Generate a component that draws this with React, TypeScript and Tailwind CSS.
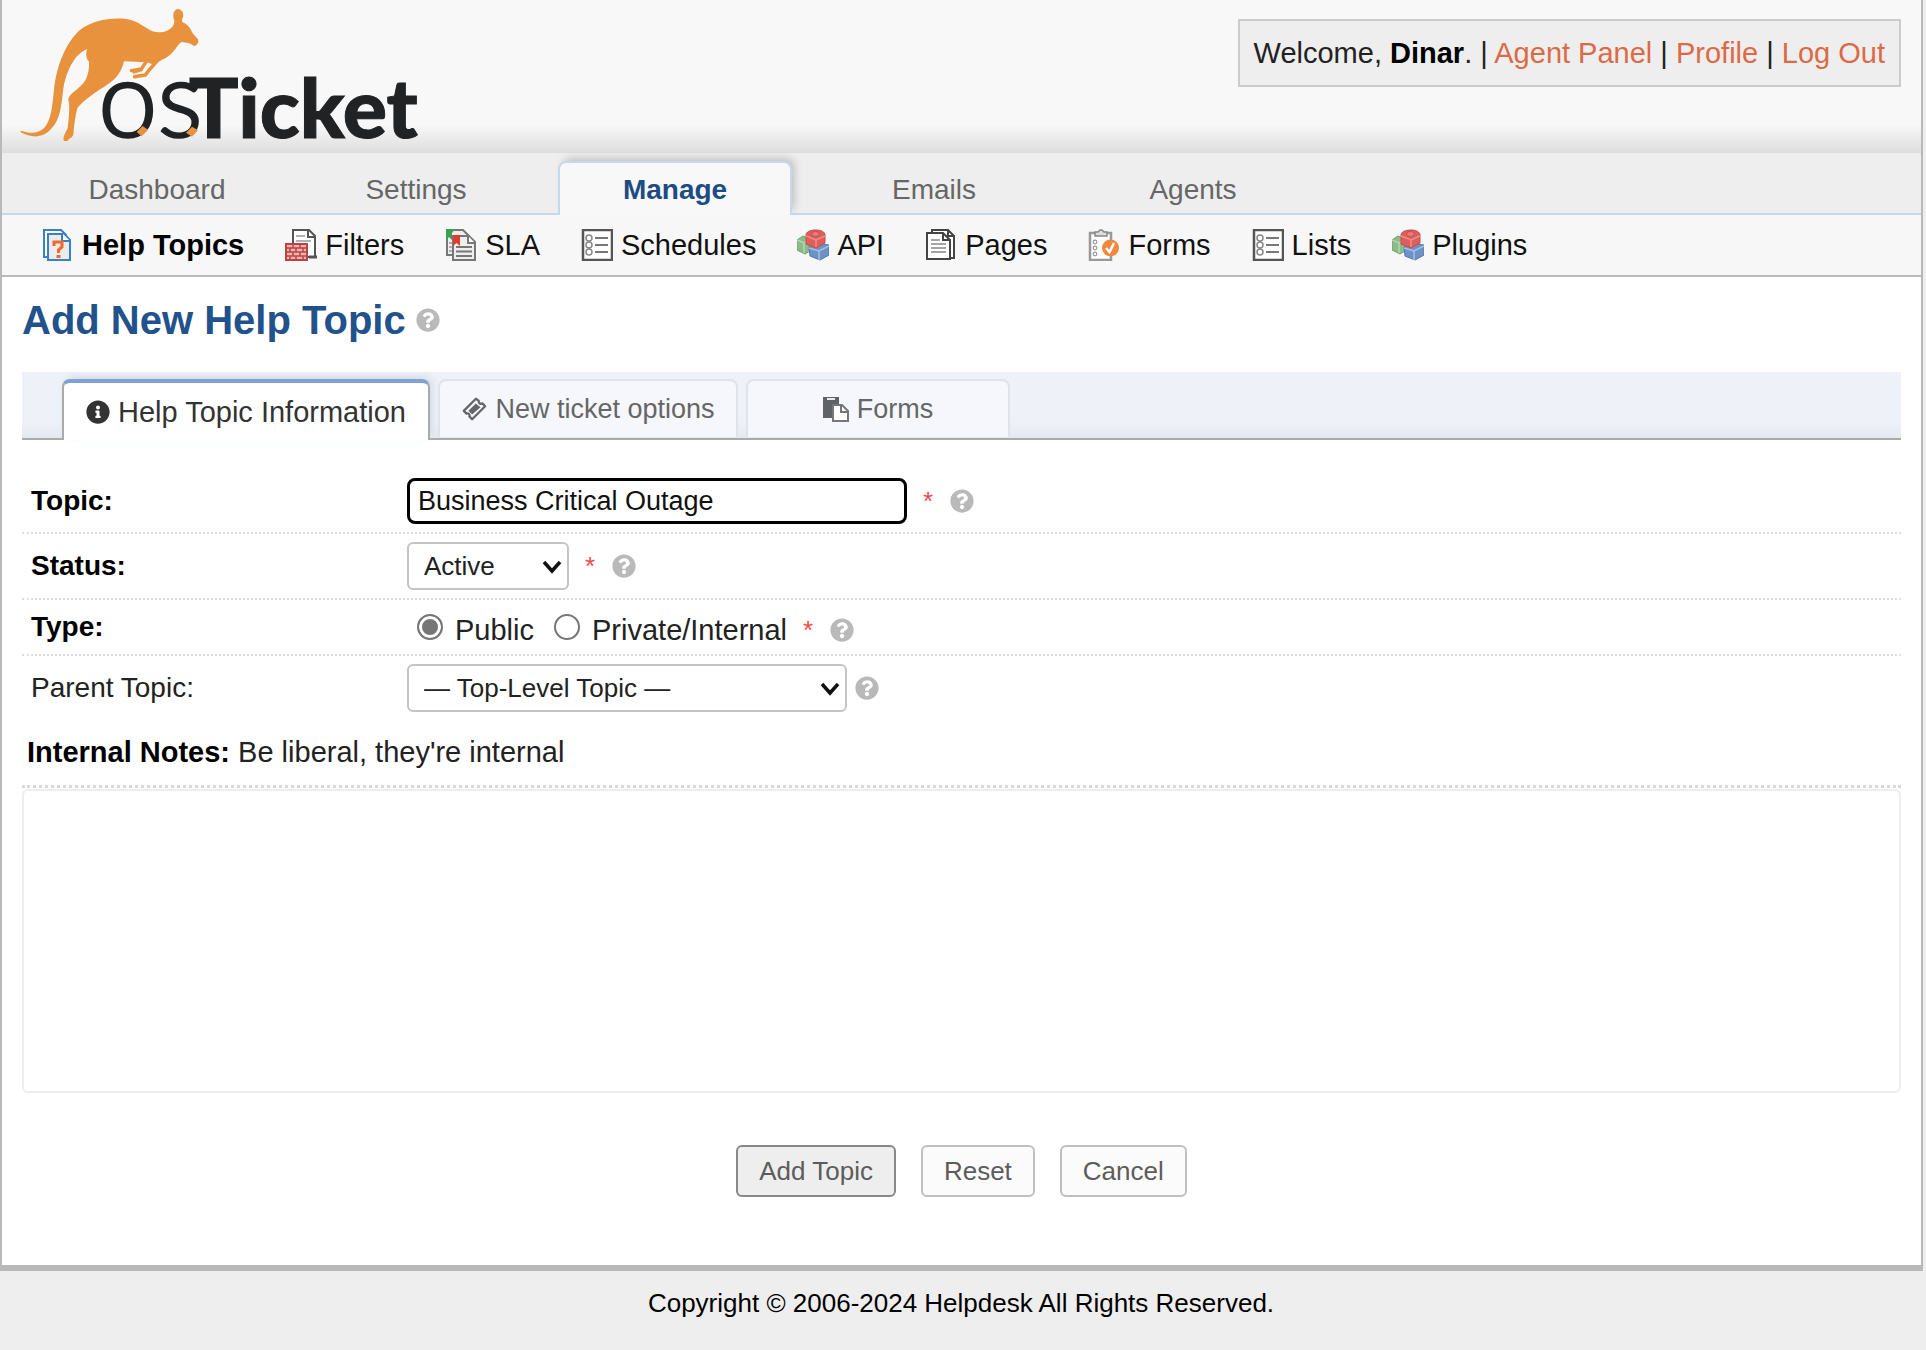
import { useState, type ReactNode } from "react";
import { FaInfoCircle, FaQuestionCircle } from "react-icons/fa";

function Logo() {
  return (
    <svg viewBox="0 0 1380 432" className="block h-36 w-[460px] overflow-visible" role="img" aria-label="osTicket">
      <g fill="#e8923e">
        <path d="M62 392C95 402 115 400 133 383C153 362 157 320 162 268C170 200 195 130 240 90C280 60 330 52 380 57C415 62 435 85 458 94C480 101 505 95 517 80C522 72 524 66 523 62C516 45 522 28 533 27C545 28 552 38 549 50C546 58 545 64 548 67C562 72 572 85 578 100L594 118C597 125 594 133 585 138C578 138 572 130 565 129L545 126C535 130 530 145 515 160C500 175 490 177 480 183L462 194L440 187L372 184C365 215 350 235 325 252C290 275 250 300 232 325C225 350 222 380 220 405C215 415 205 415 203 423L192 423C188 415 192 405 203 385C207 350 210 320 205 300C205 285 225 275 245 255C262 238 268 215 267 185C258 175 256 160 262 147C225 160 200 210 190 265C184 320 180 360 155 385C130 415 95 415 62 397Z" />
      </g>
      <g fill="none" stroke="#e8923e" strokeLinecap="round" strokeLinejoin="round">
        <path strokeWidth="10" d="M438 186L424 207L394 212M424 209L402 216" />
        <path strokeWidth="11" d="M470 184L446 212L436 225L404 230" />
      </g>
      <text x="295" y="412" fontFamily="Lato, sans-serif" fill="#202224" stroke="#202224">
        <tspan fontWeight="300" fontSize="318" strokeWidth="8">os</tspan>
        <tspan x="566" y="414" fontWeight="900" fontSize="248" strokeWidth="3">Ticket</tspan>
      </text>
      <path fill="#e8923e" d="M410 396L428 378L444 389L425 409ZM558 398L576 380L594 391L576 410Z" />
    </svg>
  );
}

function Icon({ children }: { children: ReactNode }) {
  return (
    <svg viewBox="0 0 32 32" className="h-8 w-8 shrink-0" aria-hidden="true">
      {children}
    </svg>
  );
}

const HelpTopicsIcon = () => (
  <Icon>
    <path d="M2 1H19L24 6V28H2Z" fill="#fff" stroke="#3b7fc4" strokeWidth="2" />
    <path d="M6 5H22L28 11V31H6Z" fill="#ececec" stroke="#3b7fc4" strokeWidth="2" />
    <path d="M20 4V12H28" fill="#fff" stroke="#3b7fc4" strokeWidth="2" />
    <path d="M12 17V13H20V18L16.500 21V24" fill="none" stroke="#ef6a2d" strokeWidth="3" />
    <path d="M14.500 26H18.500V29H14.500Z" fill="#ef6a2d" />
  </Icon>
);

const FiltersIcon = () => (
  <Icon>
    <path d="M8 1H24L30 7V28H8Z" fill="#fff" stroke="#555" strokeWidth="2" />
    <path d="M23 2V8H30" fill="none" stroke="#555" strokeWidth="2" />
    <path d="M11 7H20M11 12H26" stroke="#999" strokeWidth="1.500" />
    <path d="M24 28H32" stroke="#555" strokeWidth="3" />
    <path d="M1 15H22V31H1Z" fill="#f2b3b3" stroke="#b94444" strokeWidth="2" />
    <path d="M2 19H21M2 23H21M2 27H21M8 15V19M15 15V19M5 19V23M11 19V23M18 19V23M8 23V27M15 23V27M5 27V31M11 27V31M18 27V31" stroke="#b94444" strokeWidth="1.500" />
  </Icon>
);

const SlaIcon = () => (
  <Icon>
    <path d="M2 1H18L24 7V26H2Z" fill="#eee" stroke="#777" strokeWidth="2" />
    <path d="M4 14H9M4 18H9M4 22H9" stroke="#999" strokeWidth="1.500" />
    <path d="M1 0H10L7 4V11L4 8L1 11Z" fill="#39a054" />
    <path d="M8 7H24L30 13V31H8Z" fill="#eee" stroke="#777" strokeWidth="2" />
    <path d="M23 7V14H30" fill="#fff" stroke="#777" strokeWidth="2" />
    <path d="M11 18H27M11 22.500H27M11 27H27" stroke="#777" strokeWidth="1.800" />
    <path d="M8 6H15V17L11.500 14L8 17Z" fill="#e03a31" />
  </Icon>
);

const ListIcon = () => (
  <Icon>
    <path d="M2 1H31V31H2Z" fill="#fff" stroke="#555" strokeWidth="2.500" />
    <path d="M14 9H27M14 16H27M14 23H27" stroke="#777" strokeWidth="2" />
    <g fill="none" stroke="#888" strokeWidth="1.500">
      <circle cx="8" cy="9" r="3" />
      <circle cx="8" cy="16" r="3" />
      <circle cx="8" cy="23" r="3" />
    </g>
  </Icon>
);

const BlocksIcon = () => (
  <Icon>
    <path d="M0 11L6 7L13 10V22L8 25L0 21Z" fill="#8dbb8a" stroke="#6da26c" />
    <path d="M0 11L7 14L13 10M7 14V24" fill="none" stroke="#b5d6b0" strokeWidth="1.500" />
    <path d="M12 18L20 14L32 16V26L23 31L13 27Z" fill="#6b93c6" stroke="#5179ad" />
    <path d="M12 19L22 22L32 17M22 22V31" fill="none" stroke="#a5c0e2" strokeWidth="1.500" />
    <path d="M9 6C9 3 13 1 19 1C24 1 28 3 28 6V14L19 19L9 15Z" fill="#dd5f5c" stroke="#c94b49" />
    <path d="M9 7L19 11L28 7M19 11V18" fill="none" stroke="#ee8b87" strokeWidth="1.500" />
    <ellipse cx="18.500" cy="5" rx="4" ry="2.500" fill="#e87b77" stroke="#c94b49" />
  </Icon>
);

const PagesIcon = () => (
  <Icon>
    <path d="M7 1H23L29 7V29H7Z" fill="#fff" stroke="#444" strokeWidth="2" />
    <path d="M2 4H18L25 11V30H2Z" fill="#fff" stroke="#444" strokeWidth="2" />
    <path d="M18 4V11H25M23 2V7H29" fill="none" stroke="#444" strokeWidth="2" />
    <path d="M6 11H15M6 15H21M6 19H21M6 23H21" stroke="#888" strokeWidth="1.500" />
  </Icon>
);

const FormsIcon = () => (
  <Icon>
    <path d="M2 4H23V31H2Z" fill="#fff" stroke="#999" strokeWidth="2.500" />
    <path d="M7 3H10L12 1H14L16 3H19V7H7Z" fill="#ddd" stroke="#888" strokeWidth="1.500" />
    <g fill="none" stroke="#999" strokeWidth="1.200">
      <circle cx="7" cy="13" r="1.800" />
      <circle cx="7" cy="19" r="1.800" />
      <circle cx="7" cy="25" r="1.800" />
    </g>
    <circle cx="22.500" cy="19" r="8.500" fill="#f0883e" />
    <path d="M18 19L21.500 23L26 14" fill="none" stroke="#fff" strokeWidth="2.500" />
  </Icon>
);

function TicketIcon() {
  return (
    <svg viewBox="0 0 28 28" className="size-[26px] shrink-0" aria-hidden="true">
      <path
        d="M3 16L16 3L19 5C19 8 21 9 23 8L26 11L12 25L9 22C10 20 8 18 6 19Z"
        fill="none"
        stroke="currentColor"
        strokeWidth="2.500"
        strokeLinejoin="round"
      />
      <path d="M8 16L16 8L21 12L12 20Z" fill="currentColor" />
    </svg>
  );
}

function PasteIcon() {
  return (
    <svg viewBox="0 0 26 26" className="size-[26px] shrink-0" aria-hidden="true">
      <path d="M0 1H16V22H0Z" fill="#5f6368" />
      <path d="M4 3H12" stroke="#e8eaee" strokeWidth="2" />
      <path d="M10 9H19L25 15V25H10Z" fill="#fff" stroke="#777" strokeWidth="2" />
      <path d="M18 9V16H25" fill="none" stroke="#777" strokeWidth="2" />
    </svg>
  );
}

function Help() {
  return (
    <button type="button" aria-label="Help" className="block shrink-0 text-[#b9b9b9]">
      <FaQuestionCircle className="size-6" />
    </button>
  );
}

const Required = () => <span className="w-3 shrink-0 text-[26px] leading-8 text-[#ee4b4b]">*</span>;

const mainTabs = ["Dashboard", "Settings", "Manage", "Emails", "Agents"];

const subItems = [
  { label: "Help Topics", icon: <HelpTopicsIcon /> },
  { label: "Filters", icon: <FiltersIcon /> },
  { label: "SLA", icon: <SlaIcon /> },
  { label: "Schedules", icon: <ListIcon /> },
  { label: "API", icon: <BlocksIcon /> },
  { label: "Pages", icon: <PagesIcon /> },
  { label: "Forms", icon: <FormsIcon /> },
  { label: "Lists", icon: <ListIcon /> },
  { label: "Plugins", icon: <BlocksIcon /> },
];

function SelectBox({ id, options, width }: { id: string; options: string[]; width: string }) {
  return (
    <div className={`relative ${width}`}>
      <select
        id={id}
        className="h-12 w-full appearance-none rounded-md border-2 border-[#c4c4c4] bg-white pl-[15px] text-[26px] leading-8 text-[#222]"
      >
        {options.map((o) => (
          <option key={o}>{o}</option>
        ))}
      </select>
      <svg viewBox="0 0 20 14" className="pointer-events-none absolute top-[18px] right-[7px] h-3.5 w-5" aria-hidden="true">
        <path d="M2 2L10 11L18 2" fill="none" stroke="#111" strokeWidth="3.500" />
      </svg>
    </div>
  );
}

const rowClass = "flex items-center border-b-2 border-dotted border-[#dedede] pl-[9px]";
const labelClass = "w-[376px] shrink-0 text-[28px] leading-8 font-bold text-black";
const radioClass =
  "size-[26px] appearance-none rounded-full border-2 border-[#767676] bg-white checked:bg-[#767676] checked:shadow-[inset_0_0_0_3px_white]";
const tabClass = "flex items-center justify-center rounded-t-lg border-2 border-b-0 border-[#e0e4ea] bg-[#f5f7fc] text-[27px] leading-8 text-[#666]";
const buttonClass = "h-[52px] rounded-md border-2 px-[21px] text-[26px] leading-8 text-[#5c5c5c]";

export default function App() {
  const [topic, setTopic] = useState("Business Critical Outage");
  const [kind, setKind] = useState("public");

  return (
    <div className="min-h-screen bg-[#eee] font-['Liberation_Sans',Arial,sans-serif] text-[29px] leading-8 text-[#222]">
      <div className="mr-[3px] border-x-2 border-b-6 border-[#b9b9b9] bg-white">
        <header className="flex items-start justify-between bg-[linear-gradient(to_bottom,#f8f8f8_82%,#dedede)] pr-5 pb-2">
          <a href="#home" className="-ml-0.5 block">
            <Logo />
          </a>
          <p className="mt-[19px] border-2 border-[#ccc] bg-[#eee] px-3.5 py-4 whitespace-nowrap">
            Welcome, <strong className="text-black">Dinar</strong>. |{" "}
            <a href="#agent" className="text-[#dc6a45]">Agent Panel</a> |{" "}
            <a href="#profile" className="text-[#dc6a45]">Profile</a> |{" "}
            <a href="#logout" className="text-[#dc6a45]">Log Out</a>
          </p>
        </header>

        <nav className="flex gap-[25px] border-t border-[#ddd] bg-[#eee] pt-2 pl-[38px] text-[28px] leading-8 shadow-[inset_0_-2px_0_#c6d8ee]">
          {mainTabs.map((t) =>
            t === "Manage" ? (
              <a
                key={t}
                href="#manage"
                aria-current="page"
                className="w-[234px] rounded-t-lg border-2 border-b-0 border-[#c6d8ee] bg-[#f8f8f8] pt-[11px] pb-[9px] text-center font-bold text-[#1d4b82] shadow-[4px_-4px_8px_-2px_#bbb]"
              >
                {t}
              </a>
            ) : (
              <a key={t} href={`#${t}`} className="w-[234px] pt-[13px] pb-[9px] text-center text-[#666]">
                {t}
              </a>
            ),
          )}
        </nav>

        <nav className="relative flex gap-[41px] border-b-2 border-[#bbb] bg-[#f7f7f7] py-3.5 pl-10">
          {subItems.map((s, i) => (
            <a
              key={s.label}
              href={`#${s.label}`}
              className={i === 0 ? "flex items-center gap-2 font-bold text-black" : "flex items-center gap-2 text-[#111]"}
            >
              {s.icon}
              {s.label}
            </a>
          ))}
        </nav>

        <main className="px-5 pt-5">
          <div className="flex items-center gap-2.5">
            <h1 className="text-[40px] leading-[46px] font-bold text-[#22528c]">Add New Help Topic</h1>
            <Help />
          </div>

          <div role="tablist" className="mt-[29px] flex items-end bg-[linear-gradient(to_bottom,#eef1f7_75%,#e4e8ee)] pt-[7px] pl-10 shadow-[inset_0_-2px_0_#aaa]">
            <button
              type="button"
              role="tab"
              aria-selected="true"
              className="flex h-[61px] w-[368px] items-center justify-center gap-2 rounded-t-lg border-2 border-t-4 border-b-0 border-[#aaa] border-t-[#7ea1d6] bg-white text-[29px] leading-8 text-[#333] shadow-[3px_-3px_8px_-2px_#ccd3df]"
            >
              <FaInfoCircle className="size-6" />
              Help Topic Information
            </button>
            <button type="button" role="tab" aria-selected="false" className={`${tabClass} mb-[3px] ml-2 h-[58px] w-[300px] gap-2`}>
              <TicketIcon />
              New ticket options
            </button>
            <button type="button" role="tab" aria-selected="false" className={`${tabClass} mb-[3px] ml-2 h-[58px] w-[264px] gap-2`}>
              <PasteIcon />
              Forms
            </button>
          </div>

          <form onSubmit={(e) => e.preventDefault()}>
            <div className={`${rowClass} mt-[30px] h-16`}>
              <label htmlFor="topic" className={labelClass}>Topic:</label>
              <input
                id="topic"
                value={topic}
                onChange={(e) => setTopic(e.target.value)}
                className="h-[46px] w-[500px] rounded-lg border-3 border-black bg-white px-2 text-[27px] leading-8 text-[#111] outline-none"
              />
              <div className="ml-4 flex items-center gap-[15px]">
                <Required />
                <Help />
              </div>
            </div>
            <div className={`${rowClass} h-[66px]`}>
              <label htmlFor="status" className={labelClass}>Status:</label>
              <SelectBox id="status" options={["Active", "Disabled"]} width="w-[162px]" />
              <div className="ml-4 flex items-center gap-[15px]">
                <Required />
                <Help />
              </div>
            </div>
            <div className={`${rowClass} h-14`} role="radiogroup" aria-labelledby="type-label">
              <span id="type-label" className={labelClass}>Type:</span>
              <input id="public" type="radio" name="type" checked={kind === "public"} onChange={() => setKind("public")} className={`${radioClass} ml-2.5`} />
              <label htmlFor="public" className="ml-3 pt-1.5">Public</label>
              <input id="private" type="radio" name="type" checked={kind === "private"} onChange={() => setKind("private")} className={`${radioClass} ml-5`} />
              <label htmlFor="private" className="ml-3 pt-1.5">Private/Internal</label>
              <div className="ml-4 flex items-center gap-[15px] pt-1.5">
                <Required />
                <Help />
              </div>
            </div>
            <div className="flex h-16 items-center pl-[9px]">
              <label htmlFor="parent" className="w-[376px] shrink-0 text-[28px] leading-8">Parent Topic:</label>
              <SelectBox id="parent" options={["— Top-Level Topic —"]} width="w-[440px]" />
              <div className="ml-2">
                <Help />
              </div>
            </div>
            <div className="border-b-3 border-dotted border-[#d8d8d8] pt-4 pb-[17px] pl-[5px]">
              <label htmlFor="notes">
                <strong className="text-black">Internal Notes:</strong> Be liberal, they're internal
              </label>
            </div>
            <textarea id="notes" className="mt-px block h-[304px] w-full resize-none rounded-md border-2 border-[#eee] bg-white p-3 outline-none" />
            <div className="mt-[52px] flex justify-center gap-[25px] pb-[68px]">
              <button type="submit" className={`${buttonClass} border-[#888] bg-[#eee]`}>Add Topic</button>
              <button type="reset" className={`${buttonClass} border-[#bfbfbf] bg-[#fbfbfb]`}>Reset</button>
              <button type="button" className={`${buttonClass} border-[#bfbfbf] bg-[#fbfbfb]`}>Cancel</button>
            </div>
          </form>
        </main>
      </div>
      <footer className="pt-4 pr-1 text-center text-[26px] leading-8 text-black">Copyright © 2006-2024 Helpdesk All Rights Reserved.</footer>
    </div>
  );
}
